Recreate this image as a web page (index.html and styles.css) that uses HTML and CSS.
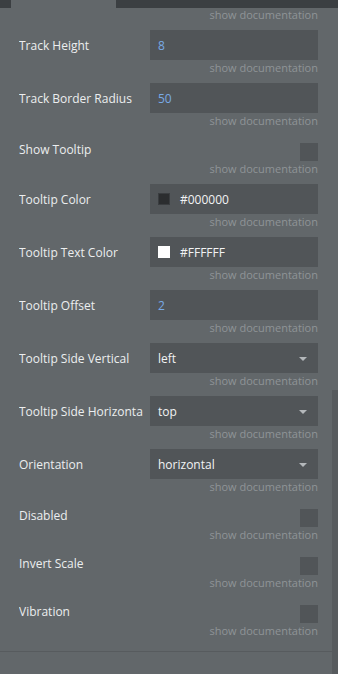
FILE: index.html
```html
<!DOCTYPE html>
<html>
<head>
<meta charset="utf-8">
<link rel="stylesheet" href="styles.css">
</head>
<body>
<div class="topbar"><div class="gap-l"></div><div class="tab"></div><div class="gap-r"></div></div>
<div class="panel">
  <div class="doc">show documentation</div>

  <div class="row"><div class="label">Track Height</div><div class="input num">8</div></div>
  <div class="doc">show documentation</div>

  <div class="row"><div class="label">Track Border Radius</div><div class="input num">50</div></div>
  <div class="doc">show documentation</div>

  <div class="row check-row"><div class="label">Show Tooltip</div><div class="checkbox"></div></div>
  <div class="doc">show documentation</div>

  <div class="row"><div class="label">Tooltip Color</div><div class="input"><span class="swatch black"></span>#000000</div></div>
  <div class="doc">show documentation</div>

  <div class="row"><div class="label">Tooltip Text Color</div><div class="input"><span class="swatch white"></span>#FFFFFF</div></div>
  <div class="doc">show documentation</div>

  <div class="row"><div class="label">Tooltip Offset</div><div class="input num">2</div></div>
  <div class="doc">show documentation</div>

  <div class="row"><div class="label">Tooltip Side Vertical</div><div class="input select">left<span class="arrow"></span></div></div>
  <div class="doc">show documentation</div>

  <div class="row"><div class="label">Tooltip Side Horizontal</div><div class="input select">top<span class="arrow"></span></div></div>
  <div class="doc">show documentation</div>

  <div class="row"><div class="label">Orientation</div><div class="input select">horizontal<span class="arrow"></span></div></div>
  <div class="doc">show documentation</div>

  <div class="row check-row"><div class="label">Disabled</div><div class="checkbox"></div></div>
  <div class="doc">show documentation</div>

  <div class="row check-row"><div class="label">Invert Scale</div><div class="checkbox"></div></div>
  <div class="doc">show documentation</div>

  <div class="row check-row"><div class="label">Vibration</div><div class="checkbox"></div></div>
  <div class="doc">show documentation</div>

  <div class="divider"></div>
</div>
<div class="scrollbar"></div>
</body>
</html>
```
FILE: styles.css
```css
html, body {
  margin: 0;
  padding: 0;
  background: #62676a;
  font-family: "Open Sans", "Liberation Sans", sans-serif;
  overflow: hidden;
  height: 674px;
}
body { position: relative; }
.topbar {
  display: flex;
  height: 8px;
}
.gap-l { width: 11px; background: #3b3f42; }
.tab { width: 105px; background: #62676a; }
.gap-r { flex: 1; background: #3b3f42; }
.panel {
  width: 338px;
  display: flex;
  flex-direction: column;
}
.doc {
  height: 16px;
  line-height: 16px;
  margin-right: 20px;
  text-align: right;
  font-size: 11px;
  color: #8f9497;
  margin-bottom: 7px;
}
.panel > .doc:first-child { margin-top: -1px; }
.row {
  display: flex;
  align-items: center;
  height: 30px;
  padding-left: 19px;
  padding-right: 20px;
}
.label {
  width: 124px;
  margin-right: 7px;
  overflow: hidden;
  white-space: nowrap;
  font-size: 12px;
  color: #eceeef;
}
.input {
  flex: 1;
  height: 30px;
  background: #515558;
  display: flex;
  align-items: center;
  padding-left: 8px;
  font-size: 12px;
  color: #f2f3f4;
  position: relative;
}
.input.num { color: #78aae6; }
.swatch {
  width: 12px;
  height: 12px;
  margin-right: 10px;
  box-sizing: border-box;
}
.swatch.black { background: #2b2d2f; border: 1px solid #3a3d40; }
.swatch.white { background: #ffffff; }
.arrow {
  position: absolute;
  right: 11px;
  top: 14px;
  width: 0;
  height: 0;
  border-left: 4px solid transparent;
  border-right: 4px solid transparent;
  border-top: 4px solid #b4b8bb;
}
.check-row {
  height: 25px;
  align-items: flex-start;
}
.check-row .label {
  flex: 1;
  padding-top: 5px;
  line-height: 17px;
}
.checkbox {
  width: 18px;
  height: 18px;
  margin-top: 7px;
  background: #515558;
}
.divider {
  margin-top: 5px;
  margin-right: 6px;
  height: 1px;
  background: #575b5e;
}
.scrollbar {
  position: absolute;
  right: 0;
  top: 390px;
  width: 6px;
  height: 284px;
  background: #575b5e;
}
```
